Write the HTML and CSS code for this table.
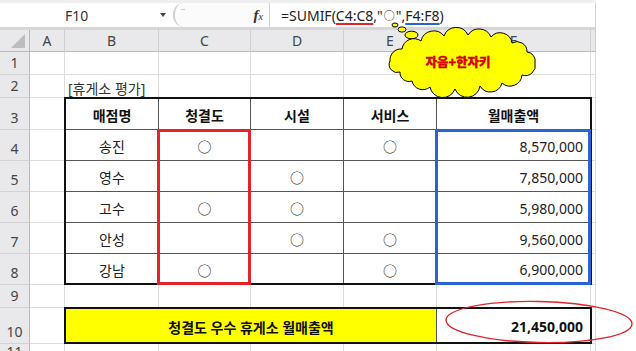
FILE: index.html
```html
<!DOCTYPE html>
<html lang="ko">
<head>
<meta charset="utf-8">
<title>SUMIF</title>
<link rel="stylesheet" href="styles.css">
</head>
<body>
<div class="app">
  <div class="fbar">
    <div class="namebox"><span class="ref">F10</span><span class="dd"></span></div>
    <div class="mid"><span class="grip"></span><span class="fx"><i class="fxf">f</i><i class="fxx">x</i></span></div>
    <div class="formula">=SUMIF(<span class="u-red">C4:C8</span>,"<span class="fcirc">○</span>",<span class="u-blue">F4:F8</span>)</div>
  </div>

  <div class="sheet">
    <div class="ch corner"><span class="tri"></span></div>
    <div class="ch">A</div>
    <div class="ch">B</div>
    <div class="ch">C</div>
    <div class="ch">D</div>
    <div class="ch">E</div>
    <div class="ch">F</div>
    <div class="ch"></div>

    <div class="rh">1</div>
    <div class="rh">2</div>
    <div class="rh">3</div>
    <div class="rh">4</div>
    <div class="rh">5</div>
    <div class="rh">6</div>
    <div class="rh">7</div>
    <div class="rh">8</div>
    <div class="rh">9</div>
    <div class="rh">10</div>
    <div class="rh">11</div>

    <div class="vl ca"></div>
    <div class="vl cb"></div>
    <div class="vl cc"></div>
    <div class="vl cd"></div>
    <div class="vl ce"></div>
    <div class="vl cf"></div>
    <div class="vl cg"></div>

    <div class="hl r1"></div>
    <div class="hl r2"></div>
    <div class="hl r3"></div>
    <div class="hl r4"></div>
    <div class="hl r5"></div>
    <div class="hl r6"></div>
    <div class="hl r7"></div>
    <div class="hl r8"></div>
    <div class="hl r9"></div>
    <div class="hl r10"></div>
    <div class="hl r11"></div>

    <div class="label cb r2">[휴게소 평가]</div>

    <div class="tbl">
      <div class="tc th">매점명</div>
      <div class="tc th">청결도</div>
      <div class="tc th">시설</div>
      <div class="tc th">서비스</div>
      <div class="tc th fcol">월매출액</div>

      <div class="tc">송진</div>
      <div class="tc">○</div>
      <div class="tc"></div>
      <div class="tc">○</div>
      <div class="tc num fcol">8,570,000</div>

      <div class="tc">영수</div>
      <div class="tc"></div>
      <div class="tc">○</div>
      <div class="tc"></div>
      <div class="tc num fcol">7,850,000</div>

      <div class="tc">고수</div>
      <div class="tc">○</div>
      <div class="tc">○</div>
      <div class="tc"></div>
      <div class="tc num fcol">5,980,000</div>

      <div class="tc">안성</div>
      <div class="tc"></div>
      <div class="tc">○</div>
      <div class="tc">○</div>
      <div class="tc num fcol">9,560,000</div>

      <div class="tc lrow">강남</div>
      <div class="tc lrow">○</div>
      <div class="tc lrow"></div>
      <div class="tc lrow">○</div>
      <div class="tc lrow num fcol">6,900,000</div>

      <div class="sel-red"></div>
      <div class="sel-blue"></div>
    </div>

    <div class="sum">
      <div class="sum-label">청결도 우수 휴게소 월매출액</div>
      <div class="sum-val">21,450,000</div>
    </div>
  </div>

  <svg class="cloud" width="154" height="74" viewBox="386 18 154 74">
    <ellipse cx="395" cy="25" rx="3" ry="2" fill="#ffff00" stroke="#000" stroke-width="1"/>
    <ellipse cx="402" cy="29.5" rx="4" ry="2.6" fill="#ffff00" stroke="#000" stroke-width="1"/>
    <ellipse cx="411.5" cy="35" rx="6.5" ry="3.8" fill="#ffff00" stroke="#000" stroke-width="1"/>
    <path d="M390,61 A11,11 0 0 1 402,49 A12,12 0 0 1 421,41 A13,13 0 0 1 444,36 A13,13 0 0 1 468,35 A13,13 0 0 1 491,37 A12,12 0 0 1 512,43 A10,10 0 0 1 527,52 A9,9 0 0 1 535,63 A10,10 0 0 1 522,75 A12,12 0 0 1 502,83 A12,12 0 0 1 480,86 A13,13 0 0 1 455,89 A13,13 0 0 1 430,87 A11,11 0 0 1 412,81 A9,9 0 0 1 400,72 A8,8 0 0 1 390,61 Z" fill="#ffff00" stroke="#000" stroke-width="1"/>
    <text class="cloud-text" x="458" y="66.5" text-anchor="middle">자음+한자키</text>
  </svg>

  <svg class="oval" width="198" height="52" viewBox="0 0 198 52">
    <ellipse cx="99" cy="26" rx="93" ry="20.5" transform="rotate(1.2 99 26)" fill="none" stroke="#e3242b" stroke-width="1.4"/>
  </svg>
</div>
</body>
</html>
```

FILE: styles.css
```css
* { box-sizing: border-box; }

body {
  margin: 0;
  width: 636px;
  height: 351px;
  overflow: hidden;
  background: #ffffff;
  font-family: "Noto Sans", "Noto Sans CJK KR", sans-serif;
  font-size: 14px;
  color: #222;
}

.app {
  position: relative;
  width: 596px;
}

/* formula bar */
.fbar {
  display: flex;
  height: 30px;
  background: #ffffff;
  border-top: 3px solid #efefef;
  border-bottom: 3px solid #d6d6d6;
}

.namebox {
  width: 173px;
  position: relative;
  display: flex;
  align-items: center;
  padding-left: 65px;
  color: #333;
}

.dd {
  position: absolute;
  left: 160px;
  top: 10px;
  width: 0;
  height: 0;
  border-left: 3.5px solid transparent;
  border-right: 3.5px solid transparent;
  border-top: 4px solid #444;
}

.mid {
  width: 96px;
  position: relative;
  display: flex;
  align-items: center;
  justify-content: flex-end;
  padding-right: 6px;
  background: #fbfbfb;
  border-left: 2px solid #d0d0d0;
  border-radius: 11px 0 0 11px;
}

.grip {
  position: absolute;
  left: 6px;
  top: 6px;
  width: 4px;
  height: 1px;
  background: #c8c8c8;
}

.fx {
  font-family: "Liberation Serif", serif;
  color: #333;
  line-height: 1;
}

.fxf {
  font-size: 15px;
  font-weight: bold;
}

.fxx {
  font-size: 10px;
}

.formula {
  flex: 1;
  display: flex;
  align-items: center;
  padding-left: 11px;
  border-left: 1px solid #d0d0d0;
  border-right: 1px solid #d0d0d0;
  color: #222;
  white-space: nowrap;
}

.fcirc {
  font-family: "Noto Sans CJK KR", sans-serif;
  font-size: 11px;
  margin: 0 1px;
}

.u-red {
  text-decoration: underline;
  text-decoration-color: #e3242b;
  text-decoration-thickness: 1.5px;
  text-underline-offset: 2px;
}

.u-blue {
  text-decoration: underline;
  text-decoration-color: #2a64d2;
  text-decoration-thickness: 1.5px;
  text-underline-offset: 2px;
}

/* sheet */
.sheet {
  display: grid;
  grid-template-columns: 30px 35px 94px 92px 93px 93px 154px 5px;
  grid-template-rows: 22px 23px 23px 32px 31px 31px 31px 31px 31px 23px 36px 20px;
}

.ch {
  background: #e9e9eb;
  border-right: 1px solid #cfcfd1;
  border-bottom: 1px solid #b9b9bb;
  display: flex;
  align-items: center;
  justify-content: center;
  color: #444;
}

.corner {
  position: relative;
  border-right: 1px solid #b9b9bb;
}

.tri {
  position: absolute;
  right: 4px;
  bottom: 3px;
  width: 14px;
  height: 14px;
  background: #bdbdbf;
  clip-path: polygon(100% 0, 100% 100%, 0 100%);
}

.rh {
  grid-column: 1;
  background: #e9e9eb;
  border-right: 1px solid #b9b9bb;
  border-bottom: 1px solid #d3d3d5;
  display: flex;
  align-items: flex-end;
  justify-content: center;
  padding-bottom: 2px;
  line-height: 18px;
  color: #444;
}

.vl { grid-row: 2 / -1; border-right: 1px solid #dcdcdc; }
.hl { grid-column: 2 / -1; border-bottom: 1px solid #dcdcdc; }

.ca { grid-column: 2; }
.cb { grid-column: 3; }
.cc { grid-column: 4; }
.cd { grid-column: 5; }
.ce { grid-column: 6; }
.cf { grid-column: 7; }
.cg { grid-column: 8; }

.r1 { grid-row: 2; }
.r2 { grid-row: 3; }
.r3 { grid-row: 4; }
.r4 { grid-row: 5; }
.r5 { grid-row: 6; }
.r6 { grid-row: 7; }
.r7 { grid-row: 8; }
.r8 { grid-row: 9; }
.r9 { grid-row: 10; }
.r10 { grid-row: 11; }
.r11 { grid-row: 12; }

.label {
  display: flex;
  align-items: center;
  padding: 2px 0 0 3px;
  white-space: nowrap;
  color: #333;
}

/* table */
.tbl {
  grid-column: 3 / 8;
  grid-row: 4 / 10;
  margin: -1px -1px 0 -1px;
  border: 2px solid #111;
  background: #fff;
  position: relative;
  display: grid;
  grid-template-columns: 93px 92px 93px 93px 1fr;
  grid-template-rows: 31px 31px 31px 31px 31px 1fr;
}

.tc {
  border-right: 1px solid #555;
  border-bottom: 1px solid #555;
  display: flex;
  align-items: center;
  justify-content: center;
  padding-top: 2px;
  color: #222;
}

.th {
  font-weight: bold;
  color: #111;
}

.fcol { border-right: none; }
.lrow { border-bottom: none; }

.num {
  justify-content: flex-end;
  padding-right: 7px;
}

.sel-red {
  position: absolute;
  left: 91px;
  width: 94px;
  top: 30px;
  bottom: -2px;
  border: 3px solid #e3242b;
}

.sel-blue {
  position: absolute;
  left: 369px;
  right: -1px;
  top: 30px;
  bottom: -2px;
  border: 3px solid #2a64d2;
}

/* summary */
.sum {
  grid-column: 3 / 8;
  grid-row: 11;
  margin: -1px -1px 0 -1px;
  border: 2px solid #111;
  display: grid;
  grid-template-columns: 371px 1fr;
  background: #fff;
}

.sum-label {
  background: #ffff00;
  border-right: 1px solid #555;
  display: flex;
  align-items: center;
  justify-content: center;
  font-weight: bold;
  color: #111;
  padding-top: 2px;
}

.sum-val {
  display: flex;
  align-items: center;
  justify-content: flex-end;
  padding: 2px 7px 0 0;
  font-weight: bold;
  color: #111;
}

/* overlays */
.cloud {
  position: absolute;
  left: 386px;
  top: 18px;
  overflow: visible;
}

.cloud-text {
  font-family: "Noto Sans CJK KR", sans-serif;
  font-size: 12.5px;
  font-weight: 900;
  fill: #e60000;
  stroke: #b00000;
  stroke-width: 0.3px;
}

.oval {
  position: absolute;
  left: 440px;
  top: 296px;
  overflow: visible;
}
```
